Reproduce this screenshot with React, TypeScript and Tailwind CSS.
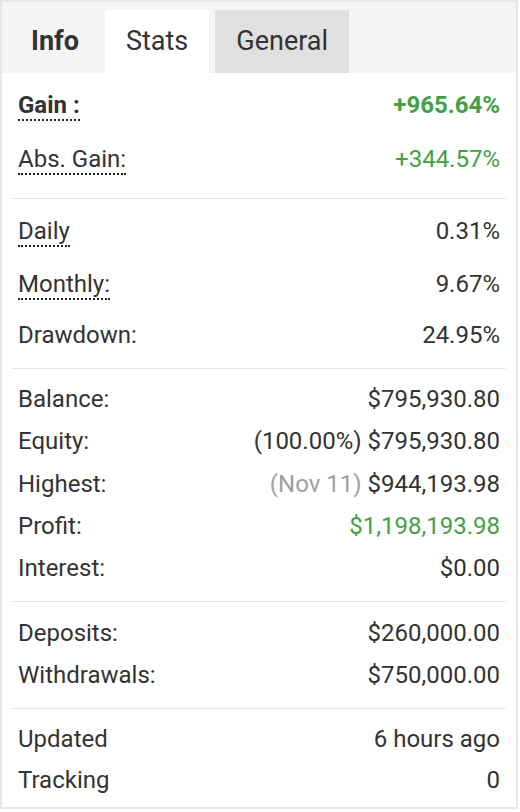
import React from 'react';

type Row = {
  label: string;
  value: React.ReactNode;
  tip?: boolean;
  bold?: boolean;
  gap?: string;
};

type Section = {
  pad: string;
  lead: string;
  rows: Row[];
};

const green = 'text-[#43a047]';

const sections: Section[] = [
  {
    pad: 'pt-[11px] pb-[8px]',
    lead: 'leading-[42px]',
    rows: [
      { label: 'Gain :', value: <span className={`font-bold ${green}`}>+965.64%</span>, tip: true, bold: true, gap: 'mb-[12px]' },
      { label: 'Abs. Gain:', value: <span className={green}>+344.57%</span>, tip: true, gap: 'mb-[10px]' },
    ],
  },
  {
    pad: 'pt-[11px] pb-[12px]',
    lead: 'leading-[42px]',
    rows: [
      { label: 'Daily', value: '0.31%', tip: true, gap: 'mb-[11px]' },
      { label: 'Monthly:', value: '9.67%', tip: true, gap: 'mb-[9px]' },
      { label: 'Drawdown:', value: '24.95%' },
    ],
  },
  {
    pad: 'pt-[9px] pb-[12px]',
    lead: 'leading-[42.25px]',
    rows: [
      { label: 'Balance:', value: '$795,930.80' },
      { label: 'Equity:', value: '(100.00%) $795,930.80' },
      {
        label: 'Highest:',
        value: (
          <>
            <span className="text-[#a0a0a0]">(Nov 11)</span> $944,193.98
          </>
        ),
      },
      { label: 'Profit:', value: <span className={green}>$1,198,193.98</span> },
      { label: 'Interest:', value: '$0.00' },
    ],
  },
  {
    pad: 'pt-[10px] pb-[12px]',
    lead: 'leading-[42px]',
    rows: [
      { label: 'Deposits:', value: '$260,000.00' },
      { label: 'Withdrawals:', value: '$750,000.00' },
    ],
  },
  {
    pad: 'pt-[10px] pb-[6px]',
    lead: 'leading-[41px]',
    rows: [
      { label: 'Updated', value: '6 hours ago' },
      { label: 'Tracking', value: '0' },
    ],
  },
];

function StatRow({ label, value, tip, bold, gap, lead }: Row & { lead: string }) {
  return (
    <div className={`flex justify-between ${lead} ${gap ?? ''}`}>
      <span className={bold ? 'font-bold' : ''}>
        {tip ? <span className="border-b-2 border-dotted border-[#222]">{label}</span> : label}
      </span>
      <span>{value}</span>
    </div>
  );
}

export default function App() {
  return (
    <div className="w-[518px] border-2 border-[#e8e8e8] bg-white text-[#333] font-['Roboto','Liberation_Sans',sans-serif]">
      <div className="flex h-[71px] items-end gap-[5px] bg-[#f5f5f5] pl-2 pr-2">
        <div className="flex h-[63px] items-center px-[21px] text-[27px] font-bold">Info</div>
        <div className="flex h-[63px] items-center bg-white px-[21px] text-[27px]">Stats</div>
        <div className="ml-px flex h-[63px] items-center bg-[#e0e0e0] px-[21px] text-[27px]">General</div>
      </div>
      <div className="px-[10px] text-[24px]">
        {sections.map((s, i) => (
          <div key={i} className={`${i > 0 ? 'border-t border-[#e6e6e6]' : ''} px-[6px] ${s.pad}`}>
            {s.rows.map((r) => (
              <StatRow key={r.label} lead={s.lead} {...r} />
            ))}
          </div>
        ))}
      </div>
    </div>
  );
}
